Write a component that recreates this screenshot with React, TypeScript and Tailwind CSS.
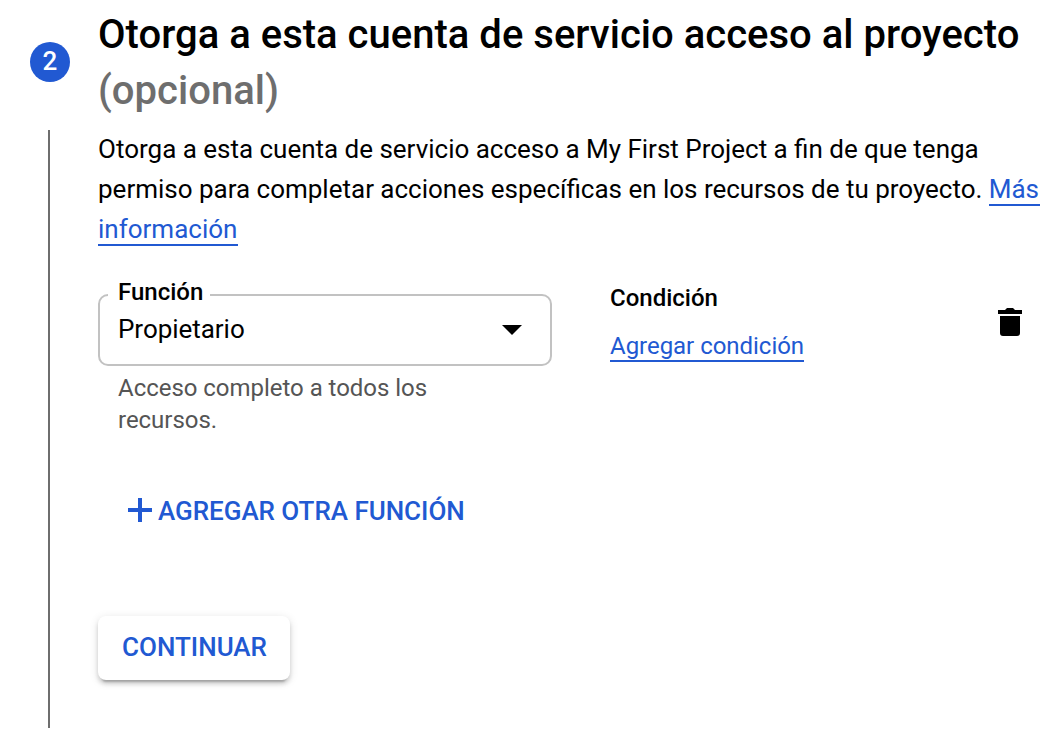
import React from "react";

const link = "border-b-2 border-[#2159d2] pr-px text-[#2159d2]";

export default function App() {
  return (
    <main className="flex h-[734px] w-[1048px] overflow-hidden bg-white font-['Roboto',sans-serif] text-black antialiased">
      <aside className="flex w-[98px] shrink-0 flex-col pt-[42px] pl-[30px]">
        <div className="flex size-10 items-center justify-center rounded-full bg-[#2159d2] pb-[2px] text-[26px] leading-none font-medium text-white">2</div>
        <div className="mt-12 ml-[18px] h-[598px] w-[2px] bg-[#6e6e6e]" />
      </aside>
      <section className="flex w-[950px] flex-col items-start pt-[7px]">
        <h1 className="text-[40px] leading-[56px] font-medium tracking-[0.015px] whitespace-nowrap">
          Otorga a esta cuenta de servicio acceso al proyecto
          <br />
          <span className="text-[#6e6e6e]">(opcional)</span>
        </h1>
        <p className="mt-[10px] text-[26px] leading-[40px] [word-spacing:-0.06px] whitespace-nowrap">
          Otorga a esta cuenta de servicio acceso a My First Project a fin de que tenga
          <br />
          permiso para completar acciones específicas en los recursos de tu proyecto. <a className={link}>Más</a>
          <br />
          <a className={link}>información</a>
        </p>
        <div className="mt-[27px] flex h-[160px] w-full">
          <div className="flex w-[454px] flex-col">
            <fieldset className="h-[90px] rounded-[10px] border-2 border-[#c2c2c2] pl-[8px]">
              <legend className="pr-[7px] pb-[6px] pl-[10px] text-[24px] leading-[32px] font-medium">Función</legend>
              <div className="-mt-[3px] flex items-center justify-between pr-[28px] pl-[10px]">
                <span className="pb-[2px] text-[26px] leading-[36px] tracking-[-0.04px]">Propietario</span>
                <svg width="20" height="10" viewBox="0 0 20 10"><path d="M0 0h20L10 10z" /></svg>
              </div>
            </fieldset>
            <p className="mt-[6px] pl-5 text-[24px] leading-[32px] tracking-[-0.03px] text-[#555]">Acceso completo a todos los<br />recursos.</p>
          </div>
          <div className="ml-[58px] flex w-[388px] flex-col items-start pt-[6px]">
            <h2 className="text-[24px] leading-[32px] font-medium">Condición</h2>
            <a className="mt-[18px] border-b-2 border-[#2159d2] text-[24px] leading-[28px] tracking-[-0.03px] text-[#2159d2]">Agregar condición</a>
          </div>
          <svg className="mt-[32px]" width="24" height="28" viewBox="0 0 24 28"><path d="M2 8h20v17a3 3 0 0 1-3 3H5a3 3 0 0 1-3-3zM0 2h7l2-2h6l2 2h7v4H0z" /></svg>
        </div>
        <button className="mt-[58px] ml-[30px] flex h-[32px] items-center gap-[6px] text-[26px] font-medium tracking-[-0.03px] whitespace-nowrap text-[#2159d2]">
          <svg width="24" height="24" viewBox="0 0 24 24"><path d="M12 0v24M0 12h24" stroke="currentColor" strokeWidth="4" /></svg>
          <span className="pt-[2px]">AGREGAR OTRA FUNCIÓN</span>
        </button>
        <button className="mt-[90px] flex h-[64px] w-[192px] items-center justify-center rounded-[8px] bg-white pb-[2px] pl-px text-[26px] font-medium text-[#2159d2] shadow-[0_6px_2px_-4px_rgba(0,0,0,0.2),0_4px_4px_rgba(0,0,0,0.14),0_2px_10px_rgba(0,0,0,0.12)]">CONTINUAR</button>
      </section>
    </main>
  );
}
